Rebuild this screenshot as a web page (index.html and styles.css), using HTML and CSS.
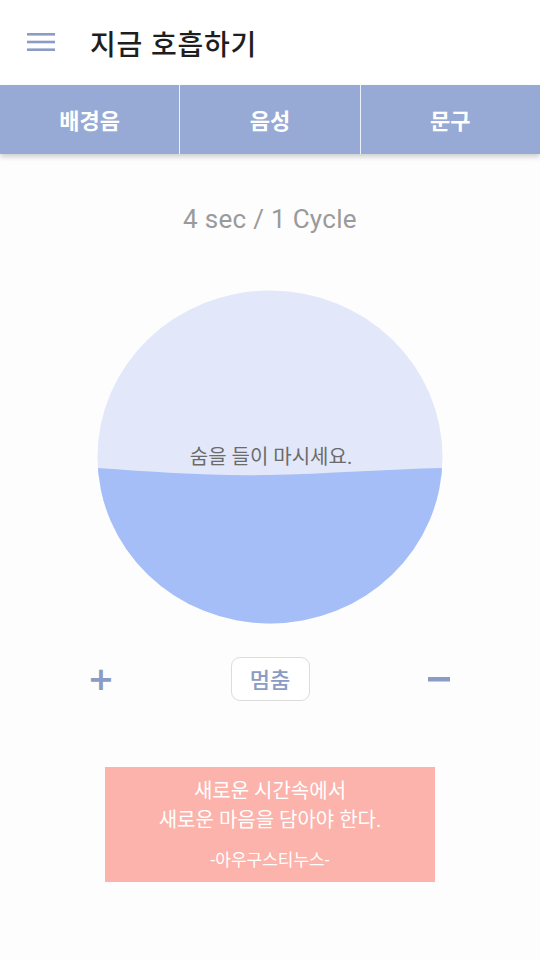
FILE: index.html
```html
<!DOCTYPE html>
<html lang="ko">
<head>
    <meta charset="UTF-8">
    <meta name="viewport" content="width=device-width, initial-scale=1.0">
    <title>지금 호흡하기</title>
    <link rel="stylesheet" href="styles.css">
</head>
<body>
    <header class="appbar">
        <span class="appbar__menu">
            <svg width="28" height="18" viewBox="0 0 28 18">
                <rect x="0" y="0" width="28" height="2.6" fill="#8b9cc4"/>
                <rect x="0" y="7.7" width="28" height="2.6" fill="#8b9cc4"/>
                <rect x="0" y="15.4" width="28" height="2.6" fill="#8b9cc4"/>
            </svg>
        </span>
        <h1 class="appbar__title">지금 호흡하기</h1>
    </header>

    <nav class="tabs">
        <button class="tabs__btn">배경음</button>
        <button class="tabs__btn">음성</button>
        <button class="tabs__btn">문구</button>
    </nav>

    <main class="breath">
        <p class="breath__cycle">4 sec / 1 Cycle</p>

        <div class="breath__circle">
            <svg width="346" height="334" viewBox="0 0 346 334">
                <defs>
                    <clipPath id="round">
                        <ellipse cx="173" cy="167" rx="172.5" ry="166.5"/>
                    </clipPath>
                </defs>
                <g clip-path="url(#round)">
                    <rect x="0" y="0" width="346" height="334" fill="#e2e8fa"/>
                    <path d="M0 178 C 60 182, 110 186, 170 185 S 290 179, 346 178 L346 334 L0 334 Z" fill="#a5bef7"/>
                </g>
            </svg>
            <span class="breath__label">숨을 들이 마시세요.</span>
        </div>

        <div class="controls">
            <button class="controls__sign">+</button>
            <button class="controls__stop">멈춤</button>
            <button class="controls__sign controls__sign--minus">
                <svg width="22" height="5" viewBox="0 0 22 5"><rect width="22" height="4.5" fill="#8b9cc4"/></svg>
            </button>
        </div>

        <div class="quote">
            <p class="quote__text">새로운 시간속에서<br>새로운 마음을 담아야 한다.</p>
            <p class="quote__author">-아우구스티누스-</p>
        </div>
    </main>
</body>
</html>
```

FILE: styles.css
```css
* {
    box-sizing: border-box;
}

body {
    margin: 0;
    background: #fdfdfe;
    font-family: Roboto, "Noto Sans CJK KR", sans-serif;
    color: #222;
}

.appbar {
    display: flex;
    align-items: center;
    height: 85px;
    padding: 0 0 0 27px;
    background: #fff;
}

.appbar__menu {
    display: flex;
    margin-top: -1px;
}

.appbar__title {
    margin: 0 0 0 35px;
    font-size: 28px;
    font-weight: 500;
    color: #1e1e1e;
    letter-spacing: 0.8px;
}

.tabs {
    display: flex;
    height: 69px;
    background: #97aad5;
    box-shadow: 0 3px 5px rgba(0, 0, 0, 0.18);
}

.tabs__btn {
    flex: 1;
    border: none;
    background: transparent;
    color: #fff;
    font-family: inherit;
    font-size: 22px;
    font-weight: 700;
    border-left: 1.5px solid #eef1fa;
    padding: 0 0 2px;
}

.tabs__btn:first-child {
    border-left: none;
}

.breath {
    display: flex;
    flex-direction: column;
    align-items: center;
}

.breath__cycle {
    margin: 50px 0 0;
    font-size: 26px;
    line-height: 30px;
    color: #9a9a9a;
    letter-spacing: 0.3px;
}

.breath__circle {
    position: relative;
    width: 346px;
    height: 334px;
    margin-top: 56px;
}

.breath__circle svg {
    display: block;
}

.breath__label {
    position: absolute;
    left: 0;
    right: 0;
    top: 151px;
    text-align: center;
    font-size: 20px;
    color: #6b6b6b;
    padding-left: 2px;
}

.controls {
    display: flex;
    align-items: center;
    justify-content: space-between;
    width: 370px;
    margin-top: 33px;
}

.controls__sign {
    width: 32px;
    border: none;
    background: transparent;
    color: #8b9cc4;
    font-family: "DejaVu Sans", sans-serif;
    font-size: 32px;
    font-weight: 700;
    padding: 0;
    line-height: 1;
}

.controls__sign--minus {
    display: flex;
    justify-content: center;
}

.controls__stop {
    width: 79px;
    height: 44px;
    border: 1.5px solid #dcdcdc;
    border-radius: 9px;
    background: #fff;
    color: #8b9cc4;
    font-family: inherit;
    font-size: 22px;
    font-weight: 500;
    padding: 0 0 2px;
}

.quote {
    width: 330px;
    margin-top: 66px;
    padding: 10px 0 11px;
    background: #fbb3ab;
    color: #fff;
    text-align: center;
}

.quote__text {
    margin: 0;
    font-size: 20px;
    line-height: 29px;
}

.quote__author {
    margin: 14px 0 0;
    font-size: 17px;
    line-height: 22px;
}
```
